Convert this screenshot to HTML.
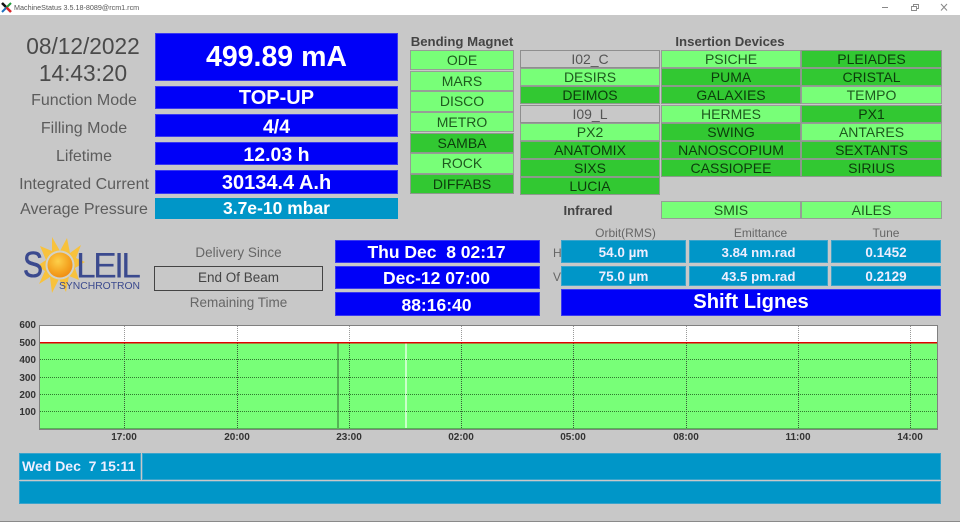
<!DOCTYPE html>
<html><head><meta charset="utf-8"><title>MachineStatus</title>
<style>
html,body{margin:0;padding:0;width:960px;height:522px;overflow:hidden;background:#c8c8c8;font-family:"Liberation Sans",sans-serif}
#p{position:relative;width:960px;height:522px;background:#c8c8c8;filter:blur(.3px)}
#p div{position:absolute;box-sizing:border-box;text-align:center;white-space:pre}
.blue{background:#0000f8;color:#fff;font-weight:bold;border:1px solid #3a3af0}
.cy{background:#0096c8;color:#eef;font-weight:bold;border:1px solid #3aa4cc}
.lab{color:#5c5c5c;font-size:16px;left:15px;width:138px}
.g{background:#78ff78;color:#1e5a1e;border:1px solid #969e96;font-size:14px}
.d{background:#32c832;color:#0c3c0c;border:1px solid #8c9a8c;font-size:14px}
.o{background:#c8c8c8;color:#555;border:1px solid #8e8e8e;font-size:14px}
.h{color:#444;font-weight:bold;font-size:13.200px}
.s{color:#666;font-size:12px}
.y{color:#333;font-size:10px;font-weight:bold;left:5px;width:31px;text-align:right!important;line-height:12px;height:12px}
.x{color:#333;font-size:10px;font-weight:bold;width:40px;top:432px;line-height:12px;height:12px}
</style></head><body><div id="p">
<div style="left:0;top:0;width:960px;height:15px;background:#fff"></div>
<svg style="position:absolute;left:1px;top:2px" width="11" height="11" viewBox="0 0 11 11"><path d="M5.500 5.500L1 1" stroke="#111" stroke-width="2.600"/><path d="M5.500 5.500L10 1" stroke="#1f9a3a" stroke-width="2"/><path d="M5.500 5.500L1 10" stroke="#1c6fc0" stroke-width="2"/><path d="M5.500 5.500L10 10" stroke="#d8262a" stroke-width="2.600"/></svg>
<div style="left:14px;top:2px;height:11px;line-height:11px;font-size:7.200px;color:#555;text-align:left">MachineStatus 3.5.18-8089@rcm1.rcm</div>
<svg style="position:absolute;left:880px;top:0" width="80" height="15" viewBox="0 0 80 15"><path d="M2 7.500H8" stroke="#888"/><path d="M31.500 6.500H36.500V10.500H31.500ZM33.500 6.500V4.500H38.500V8.500H36.500" fill="none" stroke="#888" stroke-width=".9"/><path d="M61 4L67 10.500M67 4L61 10.500" stroke="#888"/></svg>

<div style="left:14px;width:138px;top:33px;height:56px;line-height:27px;font-size:22.700px;color:#4a4a4a">08/12/2022
14:43:20</div>
<div class="lab" style="top:90px;height:22px;line-height:22px">Function Mode</div>
<div class="lab" style="top:118px;height:22px;line-height:22px">Filling Mode</div>
<div class="lab" style="top:146px;height:22px;line-height:22px">Lifetime</div>
<div class="lab" style="top:174px;height:22px;line-height:22px">Integrated Current</div>
<div class="lab" style="top:199px;height:22px;line-height:22px">Average Pressure</div>

<div class="blue" style="left:155px;top:33px;width:243px;height:48px;line-height:47px;font-size:28.500px">499.89 mA</div>
<div class="blue" style="left:155px;top:86px;width:243px;height:23px;line-height:23px;font-size:20px">TOP-UP</div>
<div class="blue" style="left:155px;top:114px;width:243px;height:23px;line-height:24px;font-size:19.500px">4/4</div>
<div class="blue" style="left:155px;top:142px;width:243px;height:23px;line-height:24px;font-size:19.500px">12.03 h</div>
<div class="blue" style="left:155px;top:170px;width:243px;height:24px;line-height:25px;font-size:20px">30134.4 A.h</div>
<div class="cy" style="left:154px;top:198px;width:244px;height:21px;line-height:21px;font-size:17.500px;color:#fff;border:0;border-left:1px solid #c8c8c8">3.7e-10 mbar</div>

<div class="h" style="left:410px;width:104px;top:34px;height:15px;line-height:15px">Bending Magnet</div>
<div class="h" style="left:640px;width:180px;top:34px;height:15px;line-height:15px">Insertion Devices</div>
<div class="h" style="left:540px;width:96px;top:203px;height:15px;line-height:15px">Infrared</div>

<div class="g" style="left:410px;width:104px;top:50px;height:20px;line-height:18px">ODE</div>
<div class="g" style="left:410px;width:104px;top:71px;height:20px;line-height:18px">MARS</div>
<div class="g" style="left:410px;width:104px;top:91px;height:21px;line-height:19px">DISCO</div>
<div class="g" style="left:410px;width:104px;top:112px;height:20px;line-height:18px">METRO</div>
<div class="d" style="left:410px;width:104px;top:133px;height:20px;line-height:18px">SAMBA</div>
<div class="g" style="left:410px;width:104px;top:153px;height:21px;line-height:19px">ROCK</div>
<div class="d" style="left:410px;width:104px;top:174px;height:20px;line-height:18px">DIFFABS</div>

<div class="o" style="left:520px;width:140px;top:50px;height:18px;line-height:16px">I02_C</div>
<div class="g" style="left:520px;width:140px;top:68px;height:18px;line-height:16px">DESIRS</div>
<div class="d" style="left:520px;width:140px;top:86px;height:18px;line-height:16px">DEIMOS</div>
<div class="o" style="left:520px;width:140px;top:105px;height:18px;line-height:16px">I09_L</div>
<div class="g" style="left:520px;width:140px;top:123px;height:18px;line-height:16px">PX2</div>
<div class="d" style="left:520px;width:140px;top:141px;height:18px;line-height:16px">ANATOMIX</div>
<div class="d" style="left:520px;width:140px;top:159px;height:18px;line-height:16px">SIXS</div>
<div class="d" style="left:520px;width:140px;top:177px;height:18px;line-height:16px">LUCIA</div>

<div class="g" style="left:661px;width:140px;top:50px;height:18px;line-height:16px">PSICHE</div>
<div class="d" style="left:661px;width:140px;top:68px;height:18px;line-height:16px">PUMA</div>
<div class="d" style="left:661px;width:140px;top:86px;height:18px;line-height:16px">GALAXIES</div>
<div class="g" style="left:661px;width:140px;top:105px;height:18px;line-height:16px">HERMES</div>
<div class="d" style="left:661px;width:140px;top:123px;height:18px;line-height:16px">SWING</div>
<div class="d" style="left:661px;width:140px;top:141px;height:18px;line-height:16px">NANOSCOPIUM</div>
<div class="d" style="left:661px;width:140px;top:159px;height:18px;line-height:16px">CASSIOPEE</div>
<div class="g" style="left:661px;width:140px;top:201px;height:18px;line-height:16px">SMIS</div>

<div class="d" style="left:801px;width:141px;top:50px;height:18px;line-height:16px">PLEIADES</div>
<div class="d" style="left:801px;width:141px;top:68px;height:18px;line-height:16px">CRISTAL</div>
<div class="g" style="left:801px;width:141px;top:86px;height:18px;line-height:16px">TEMPO</div>
<div class="d" style="left:801px;width:141px;top:105px;height:18px;line-height:16px">PX1</div>
<div class="g" style="left:801px;width:141px;top:123px;height:18px;line-height:16px">ANTARES</div>
<div class="d" style="left:801px;width:141px;top:141px;height:18px;line-height:16px">SEXTANTS</div>
<div class="d" style="left:801px;width:141px;top:159px;height:18px;line-height:16px">SIRIUS</div>
<div class="g" style="left:801px;width:141px;top:201px;height:18px;line-height:16px">AILES</div>

<svg style="position:absolute;left:18px;top:234px" width="128" height="62" viewBox="18 234 128 62">
<defs><radialGradient id="sun" cx=".42" cy=".35" r=".7"><stop offset="0" stop-color="#fdd04a"/><stop offset=".6" stop-color="#f5a623"/><stop offset="1" stop-color="#ee8a12"/></radialGradient></defs>
<path fill="#f8c23c" d="M52 237L60 251L67 238L70 253L81 245L76 258L85 262L75 268L79 280L69 276L66 292L59 279L52 293L50 277L39 284L45 271L37 266L46 260L40 246L52 251Z"/>
<circle cx="60" cy="265" r="14.500" fill="#d2d2c6"/><circle cx="60" cy="265" r="12.500" fill="url(#sun)"/>
<text x="23" y="277" font-family="Liberation Sans" font-size="36" fill="#3b4a8e" textLength="20" lengthAdjust="spacingAndGlyphs" stroke="#3b4a8e" stroke-width=".6">S</text>
<text x="76" y="277.500" font-family="Liberation Sans" font-size="35.500" fill="#3b4a8e" textLength="65" lengthAdjust="spacing">LEIL</text>
<text x="59" y="289" font-family="Liberation Sans" font-size="10.500" fill="#3b4a8e" textLength="81" lengthAdjust="spacingAndGlyphs">SYNCHROTRON</text>
</svg>

<div style="left:154px;width:169px;top:243px;height:19px;line-height:19px;font-size:13.500px;color:#666">Delivery Since</div>
<div style="left:154px;width:169px;top:266px;height:25px;line-height:22px;font-size:13.500px;color:#444;border:1.500px solid #444">End Of Beam</div>
<div style="left:154px;width:169px;top:293px;height:19px;line-height:19px;font-size:13.500px;color:#666">Remaining Time</div>

<div class="blue" style="left:335px;top:240px;width:205px;height:23px;line-height:23px;font-size:17.500px;padding-right:2px">Thu Dec  8 02:17</div>
<div class="blue" style="left:335px;top:266px;width:205px;height:23px;line-height:23px;font-size:17.500px;padding-right:2px">Dec-12 07:00</div>
<div class="blue" style="left:335px;top:292px;width:205px;height:24px;line-height:24px;font-size:17.500px;padding-right:2px">88:16:40</div>

<div class="s" style="left:563px;width:125px;top:226px;height:14px;line-height:14px">Orbit(RMS)</div>
<div class="s" style="left:691px;width:139px;top:226px;height:14px;line-height:14px">Emittance</div>
<div class="s" style="left:831px;width:110px;top:226px;height:14px;line-height:14px">Tune</div>
<div class="s" style="left:553px;width:10px;top:246px;height:14px;line-height:14px;text-align:left">H</div>
<div class="s" style="left:553px;width:10px;top:270px;height:14px;line-height:14px;text-align:left">V</div>

<div class="cy" style="left:561px;top:240px;width:125px;height:23px;line-height:23px;font-size:13.500px">54.0 µm</div>
<div class="cy" style="left:689px;top:240px;width:139px;height:23px;line-height:23px;font-size:13.300px">3.84 nm.rad</div>
<div class="cy" style="left:831px;top:240px;width:110px;height:23px;line-height:23px;font-size:13.500px">0.1452</div>
<div class="cy" style="left:561px;top:266px;width:125px;height:20px;line-height:20px;font-size:13.500px">75.0 µm</div>
<div class="cy" style="left:689px;top:266px;width:139px;height:20px;line-height:20px;font-size:13.300px">43.5 pm.rad</div>
<div class="cy" style="left:831px;top:266px;width:110px;height:20px;line-height:20px;font-size:13.500px">0.2129</div>
<div class="blue" style="left:561px;top:289px;width:380px;height:27px;line-height:25px;font-size:20.200px;font-weight:bold">Shift Lignes</div>

<svg style="position:absolute;left:0;top:320px" width="960" height="115" viewBox="0 320 960 115" shape-rendering="crispEdges">
<rect x="40" y="325" width="898" height="104" fill="#fff"/>
<rect x="40" y="343" width="898" height="86" fill="#78ff78"/>
<rect x="337" y="343" width="2" height="86" fill="#55b455"/>
<rect x="405" y="343" width="2" height="86" fill="#c8ffc8"/>
<g stroke="#2f7a2f" stroke-dasharray="1 1"><path d="M40 359.500H938M40 377.500H938M40 394.500H938M40 411.500H938"/></g>
<g stroke="#3a5a3a" stroke-dasharray="1 1"><path d="M124.500 343V429M237.500 343V429M349.500 343V429M461.500 343V429M573.500 343V429M686.500 343V429M798.500 343V429M910.500 343V429"/></g>
<g stroke="#999" stroke-dasharray="1 1"><path d="M124.500 326V342M237.500 326V342M349.500 326V342M461.500 326V342M573.500 326V342M686.500 326V342M798.500 326V342M910.500 326V342"/></g>
<rect x="40" y="342" width="898" height="1.500" fill="#e00000"/>
<path d="M39.500 430V325.500H937.500V429.500H40" fill="none" stroke="#808080"/>
<path d="M40 428.500H937" stroke="#55b455"/>
</svg>

<div class="y" style="top:320px">600</div>
<div class="y" style="top:338px">500</div>
<div class="y" style="top:355px">400</div>
<div class="y" style="top:373px">300</div>
<div class="y" style="top:390px">200</div>
<div class="y" style="top:407px">100</div>
<div class="x" style="left:104px">17:00</div>
<div class="x" style="left:217px">20:00</div>
<div class="x" style="left:329px">23:00</div>
<div class="x" style="left:441px">02:00</div>
<div class="x" style="left:553px">05:00</div>
<div class="x" style="left:666px">08:00</div>
<div class="x" style="left:778px">11:00</div>
<div class="x" style="left:890px">14:00</div>

<div class="cy" style="left:19px;top:453px;width:122px;height:27px;line-height:25px;font-size:14px;text-align:left;padding-left:2px">Wed Dec  7 15:11</div>
<div class="cy" style="left:142px;top:453px;width:799px;height:27px"></div>
<div class="cy" style="left:19px;top:481px;width:922px;height:23px"></div>
<div style="left:0;top:521px;width:960px;height:1px;background:#8a8a8a"></div>
</div></body></html>
